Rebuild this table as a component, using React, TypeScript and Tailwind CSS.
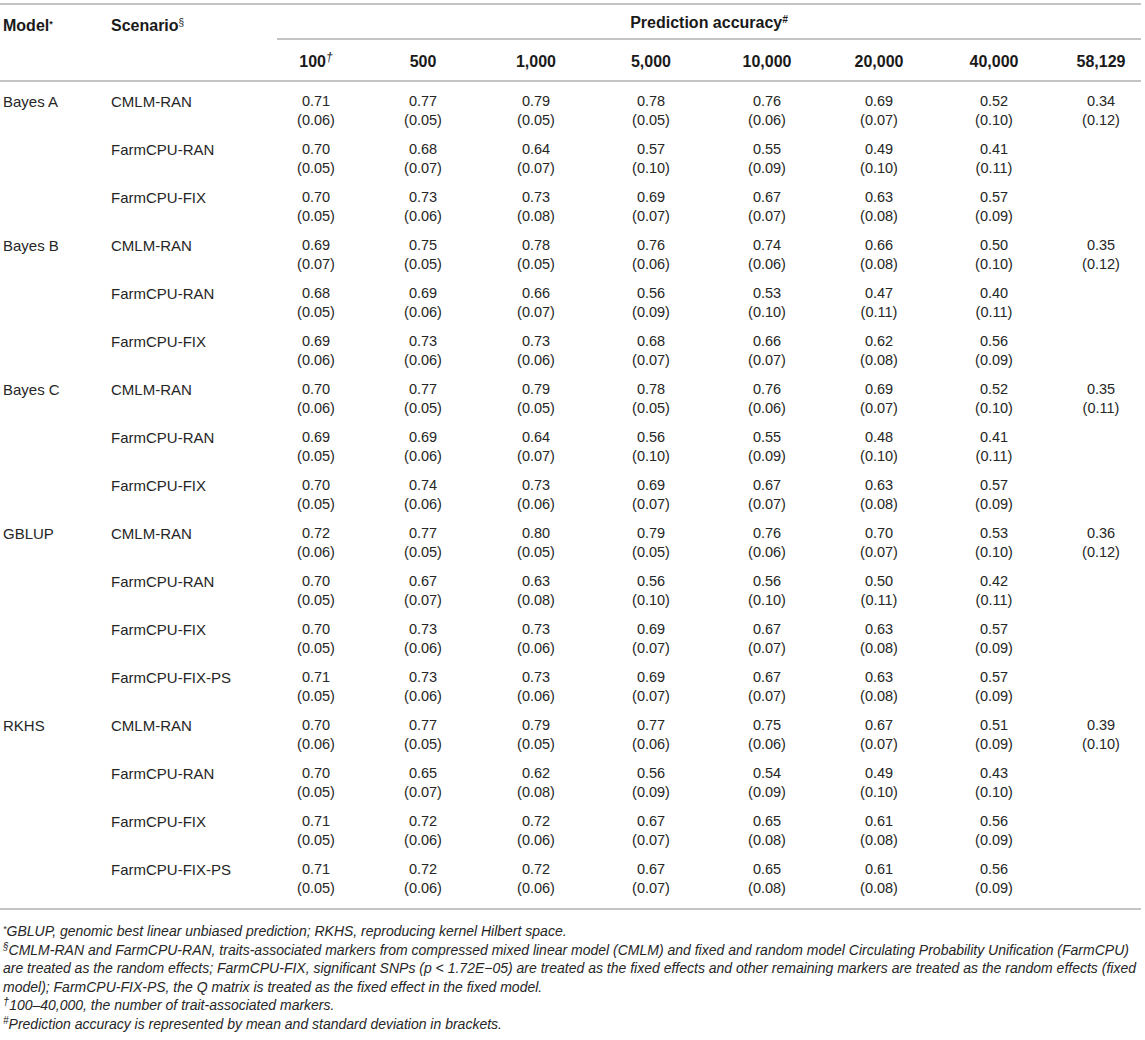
import React from 'react';

type Row = { model?: string; scenario: string; cells: [string, string][] };

const heads = ['100', '500', '1,000', '5,000', '10,000', '20,000', '40,000', '58,129'];

const parse = (s: string): [string, string][] =>
  s.split(' ').map(t => {
    const m = t.match(/^([\d.]+)\(([\d.]+)\)$/)!;
    return [m[1], `(${m[2]})`];
  });

const rows: Row[] = [
  { model: 'Bayes A', scenario: 'CMLM-RAN', cells: parse('0.71(0.06) 0.77(0.05) 0.79(0.05) 0.78(0.05) 0.76(0.06) 0.69(0.07) 0.52(0.10) 0.34(0.12)') },
  { scenario: 'FarmCPU-RAN', cells: parse('0.70(0.05) 0.68(0.07) 0.64(0.07) 0.57(0.10) 0.55(0.09) 0.49(0.10) 0.41(0.11)') },
  { scenario: 'FarmCPU-FIX', cells: parse('0.70(0.05) 0.73(0.06) 0.73(0.08) 0.69(0.07) 0.67(0.07) 0.63(0.08) 0.57(0.09)') },
  { model: 'Bayes B', scenario: 'CMLM-RAN', cells: parse('0.69(0.07) 0.75(0.05) 0.78(0.05) 0.76(0.06) 0.74(0.06) 0.66(0.08) 0.50(0.10) 0.35(0.12)') },
  { scenario: 'FarmCPU-RAN', cells: parse('0.68(0.05) 0.69(0.06) 0.66(0.07) 0.56(0.09) 0.53(0.10) 0.47(0.11) 0.40(0.11)') },
  { scenario: 'FarmCPU-FIX', cells: parse('0.69(0.06) 0.73(0.06) 0.73(0.06) 0.68(0.07) 0.66(0.07) 0.62(0.08) 0.56(0.09)') },
  { model: 'Bayes C', scenario: 'CMLM-RAN', cells: parse('0.70(0.06) 0.77(0.05) 0.79(0.05) 0.78(0.05) 0.76(0.06) 0.69(0.07) 0.52(0.10) 0.35(0.11)') },
  { scenario: 'FarmCPU-RAN', cells: parse('0.69(0.05) 0.69(0.06) 0.64(0.07) 0.56(0.10) 0.55(0.09) 0.48(0.10) 0.41(0.11)') },
  { scenario: 'FarmCPU-FIX', cells: parse('0.70(0.05) 0.74(0.06) 0.73(0.06) 0.69(0.07) 0.67(0.07) 0.63(0.08) 0.57(0.09)') },
  { model: 'GBLUP', scenario: 'CMLM-RAN', cells: parse('0.72(0.06) 0.77(0.05) 0.80(0.05) 0.79(0.05) 0.76(0.06) 0.70(0.07) 0.53(0.10) 0.36(0.12)') },
  { scenario: 'FarmCPU-RAN', cells: parse('0.70(0.05) 0.67(0.07) 0.63(0.08) 0.56(0.10) 0.56(0.10) 0.50(0.11) 0.42(0.11)') },
  { scenario: 'FarmCPU-FIX', cells: parse('0.70(0.05) 0.73(0.06) 0.73(0.06) 0.69(0.07) 0.67(0.07) 0.63(0.08) 0.57(0.09)') },
  { scenario: 'FarmCPU-FIX-PS', cells: parse('0.71(0.05) 0.73(0.06) 0.73(0.06) 0.69(0.07) 0.67(0.07) 0.63(0.08) 0.57(0.09)') },
  { model: 'RKHS', scenario: 'CMLM-RAN', cells: parse('0.70(0.06) 0.77(0.05) 0.79(0.05) 0.77(0.06) 0.75(0.06) 0.67(0.07) 0.51(0.09) 0.39(0.10)') },
  { scenario: 'FarmCPU-RAN', cells: parse('0.70(0.05) 0.65(0.07) 0.62(0.08) 0.56(0.09) 0.54(0.09) 0.49(0.10) 0.43(0.10)') },
  { scenario: 'FarmCPU-FIX', cells: parse('0.71(0.05) 0.72(0.06) 0.72(0.06) 0.67(0.07) 0.65(0.08) 0.61(0.08) 0.56(0.09)') },
  { scenario: 'FarmCPU-FIX-PS', cells: parse('0.71(0.05) 0.72(0.06) 0.72(0.06) 0.67(0.07) 0.65(0.08) 0.61(0.08) 0.56(0.09)') },
];

const cols = 'grid grid-cols-[108px_152px_106px_108px_118px_112px_120px_104px_126px_88px]';

export default function App() {
  return (
    <div className="w-[1145px] h-[1040px] bg-white text-[#262626] font-['Liberation_Sans',Arial,sans-serif] overflow-hidden">
      {/* top rule */}
      <div className="mt-[3px] h-[2px] w-[1141px] bg-[#c4c4c4]" />

      {/* header */}
      <div className={`${cols} pl-[3px] font-bold text-[16px] leading-[19px] text-[#1a1a1a]`}>
        <div className="pt-[11px] h-[35px]">
          Model<sup className="text-[9px]">*</sup>
        </div>
        <div className="pt-[11px]">
          Scenario<sup className="text-[10px] font-normal">§</sup>
        </div>
        <div className="col-span-8 ml-[14px] mr-[4px] pt-[8px] text-center border-b-2 border-[#c4c4c4]">
          Prediction accuracy<sup className="text-[10px] italic">#</sup>
        </div>
        <div />
        <div />
        {heads.map((h, i) => (
          <div key={h} className="text-center pt-[12px] h-[40px]">
            {h}
            {i === 0 && <sup className="text-[12px] italic font-normal">†</sup>}
          </div>
        ))}
      </div>

      <div className="h-[2px] w-[1141px] bg-[#c4c4c4]" />

      {/* body */}
      <div className="pb-[10px]">
        {rows.map((r, ri) => (
          <div key={ri} className={`${cols} pl-[3px] h-[48px] pt-[10px] leading-[19px]`}>
            <div className="text-[15px]">{r.model ?? ''}</div>
            <div className="text-[15px]">{r.scenario}</div>
            {r.cells.map(([v, sd], ci) => (
              <div key={ci} className="flex flex-col items-center text-[14.5px]">
                <span>{v}</span>
                <span>{sd}</span>
              </div>
            ))}
          </div>
        ))}
      </div>

      <div className="h-[2px] w-[1141px] bg-[#c4c4c4]" />

      {/* footnotes */}
      <div className="pl-[3px] pt-[12px] italic text-[14px] leading-[18.5px] whitespace-nowrap">
        <div>
          <sup className="text-[9px]">*</sup>GBLUP, genomic best linear unbiased prediction; RKHS, reproducing kernel Hilbert space.
        </div>
        <div>
          <sup className="text-[10px]">§</sup>CMLM-RAN and FarmCPU-RAN, traits-associated markers from compressed mixed linear model (CMLM) and fixed and random model Circulating Probability Unification (FarmCPU)
        </div>
        <div>
          are treated as the random effects; FarmCPU-FIX, significant SNPs (p &lt; 1.72E−05) are treated as the fixed effects and other remaining markers are treated as the random effects (fixed
        </div>
        <div>model); FarmCPU-FIX-PS, the Q matrix is treated as the fixed effect in the fixed model.</div>
        <div>
          <sup className="text-[11px]">†</sup>100–40,000, the number of trait-associated markers.
        </div>
        <div>
          <sup className="text-[10px]">#</sup>Prediction accuracy is represented by mean and standard deviation in brackets.
        </div>
      </div>
    </div>
  );
}
